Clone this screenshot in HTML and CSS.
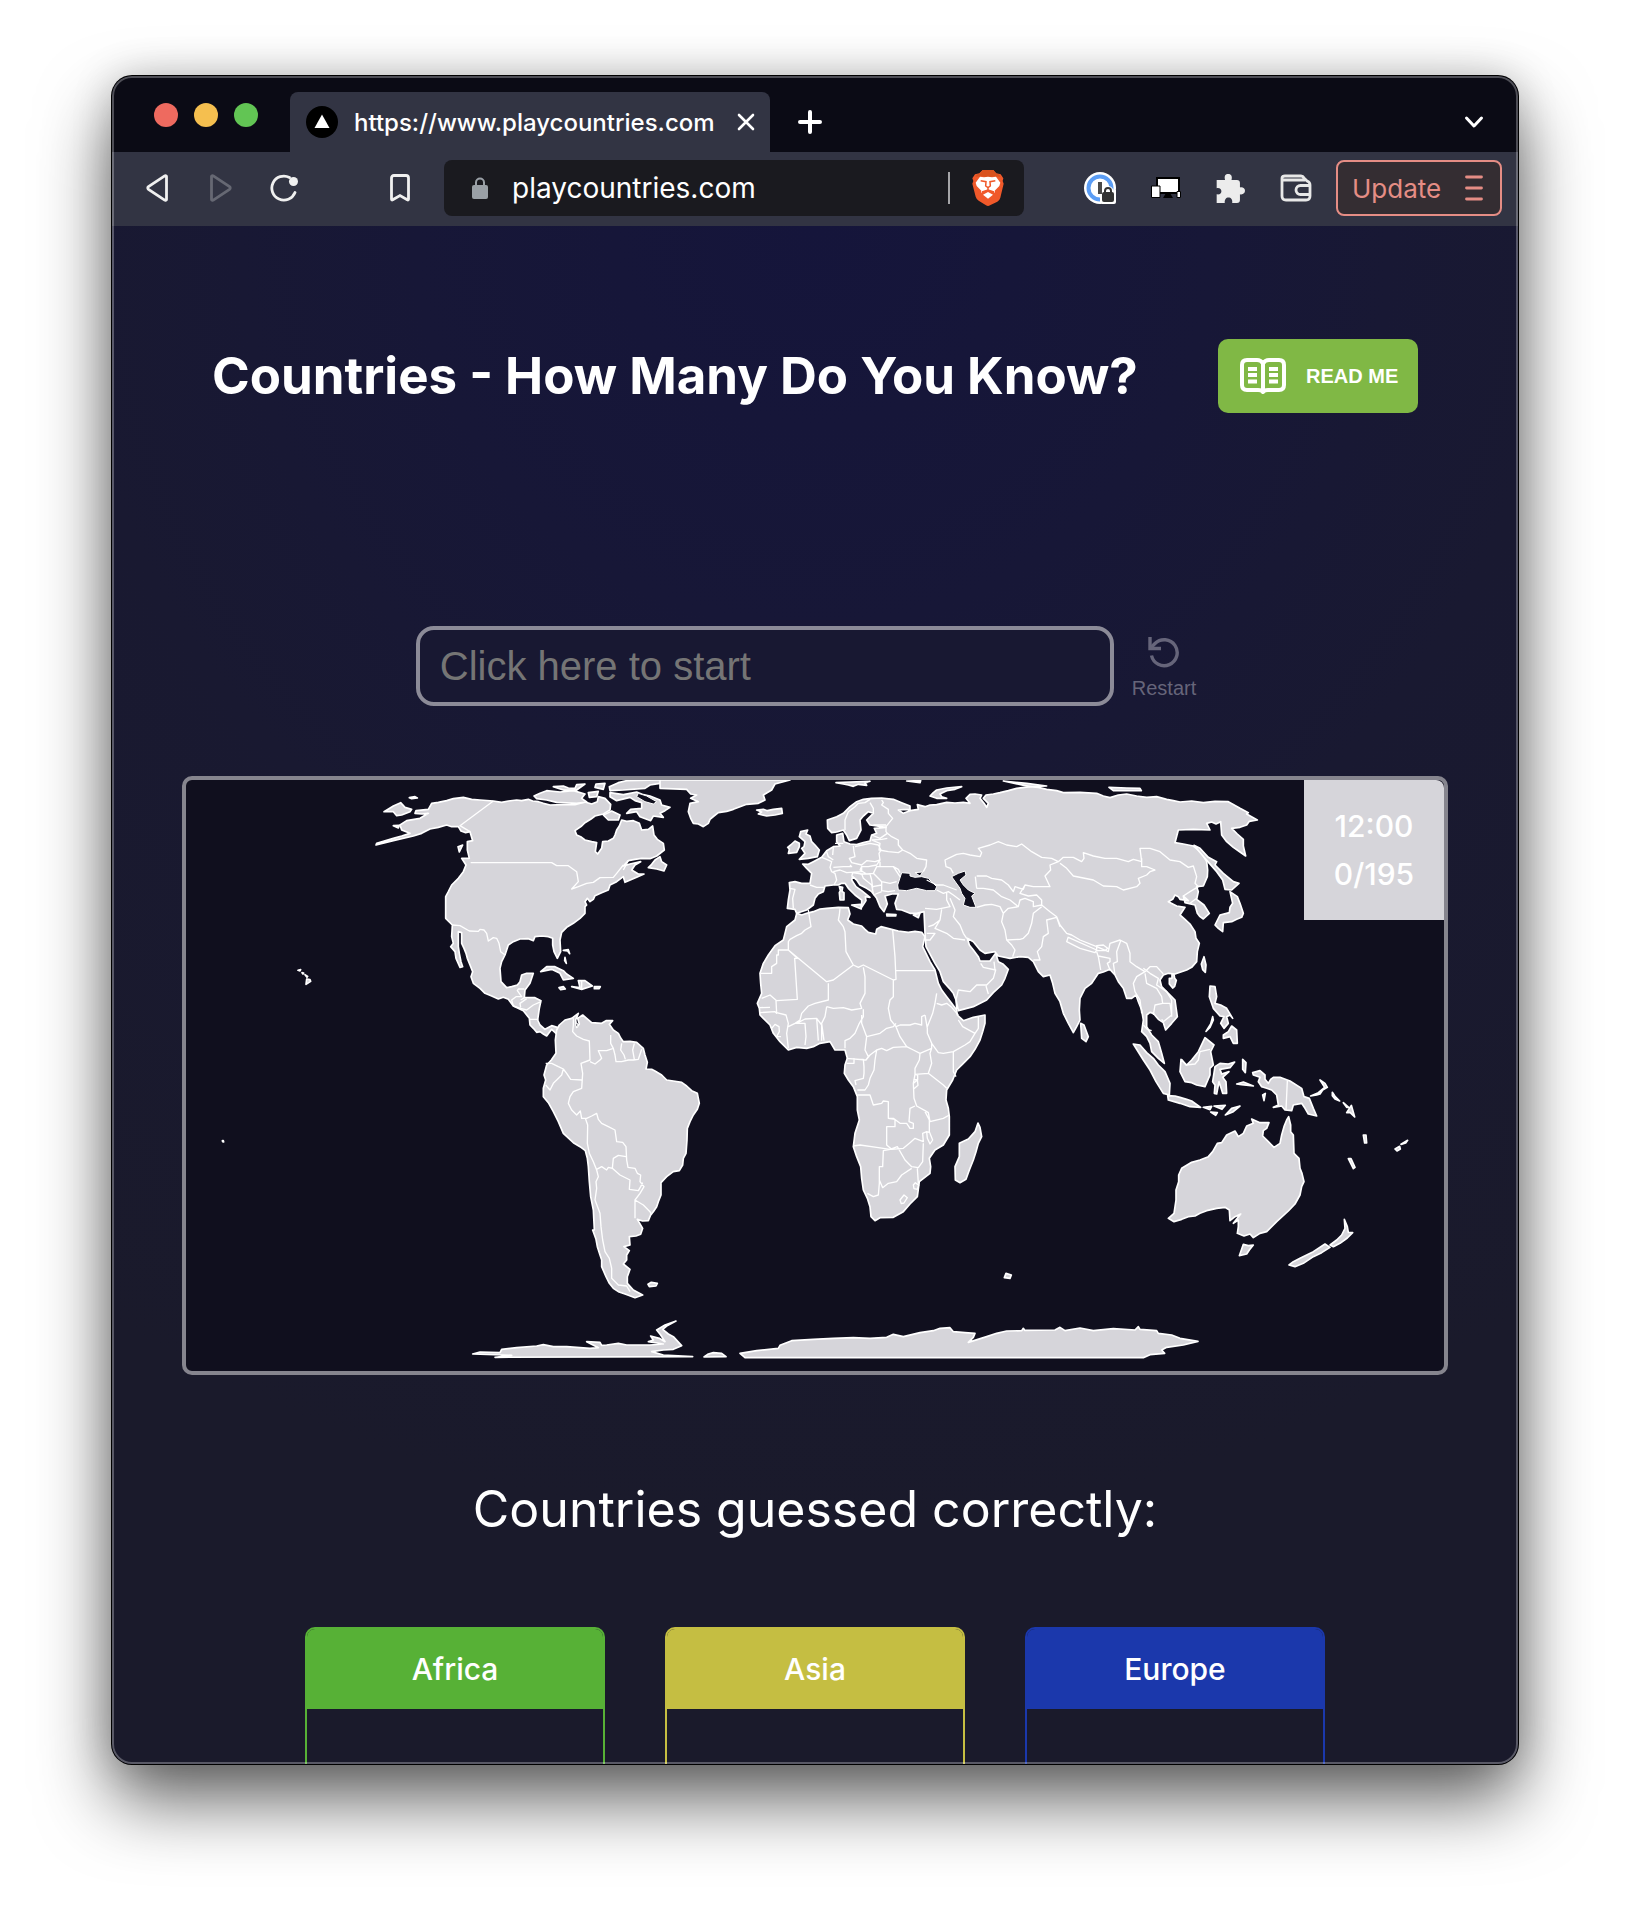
FILE: index.html
```html
<!DOCTYPE html>
<html lang="en">
<head>
<meta charset="utf-8">
<title>Countries - How Many Do You Know?</title>
<link rel="stylesheet" href="styles.css">
</head>
<body>
<div class="window">
  <header class="tabstrip">
    <div class="lights">
      <span class="light light-close"></span>
      <span class="light light-min"></span>
      <span class="light light-max"></span>
    </div>
    <div class="tab">
      <svg class="favicon" viewBox="0 0 32 32" width="32" height="32" aria-hidden="true"><circle cx="16" cy="16" r="16" fill="#000"/><path d="M16 8.500l7.500 13.500h-15z" fill="#fff"/></svg>
      <span class="tab-title">https://www.playcountries.com</span>
      <button class="plain" aria-label="Close tab"><svg viewBox="0 0 18 18" width="18" height="18"><path d="M2 2l14 14M16 2L2 16" stroke="#fff" stroke-width="2.600" stroke-linecap="round"/></svg></button>
    </div>
    <button class="plain new-tab" aria-label="New tab"><svg viewBox="0 0 24 24" width="24" height="24"><path d="M12 2v20M2 12h20" stroke="#fff" stroke-width="4" stroke-linecap="round"/></svg></button>
    <button class="plain tab-list" aria-label="List tabs"><svg viewBox="0 0 20 14" width="20" height="14"><path d="M2.500 3l7.500 8 7.500-8" fill="none" stroke="#fff" stroke-width="3" stroke-linecap="round" stroke-linejoin="round"/></svg></button>
  </header>

  <nav class="toolbar">
    <div class="nav-buttons">
      <button class="plain" aria-label="Back"><svg viewBox="-3 0 28 28" width="28" height="28"><path d="M21.500 2.600v22.800c0 .8-1 1.200-1.800.7L3.500 15.300c-1-.8-1-1.800 0-2.600L19.700 1.900c.8-.5 1.800-.1 1.800.7z" fill="none" stroke="#f0f0f0" stroke-width="2.800"/></svg></button>
      <button class="plain" aria-label="Forward"><svg viewBox="1 0 28 28" width="28" height="28"><path d="M6.500 2.600v22.800c0 .8 1 1.200 1.800.7l16.200-10.800c1-.8 1-1.800 0-2.600L8.300 1.900c-.8-.5-1.800-.1-1.800.7z" fill="none" stroke="#666873" stroke-width="2.800"/></svg></button>
      <button class="plain" aria-label="Reload"><svg viewBox="0 0 28 28" width="28" height="28"><path d="M25 18.500A12 12 0 1 1 19.500 3.500" fill="none" stroke="#f0f0f0" stroke-width="2.800" stroke-linecap="round"/><circle cx="23.500" cy="7.500" r="4.500" fill="#f0f0f0"/></svg></button>
    </div>
    <button class="plain bookmark" aria-label="Bookmark"><svg viewBox="0 0 20 28" width="20" height="28"><path d="M1.500 4q0-2.500 2.500-2.500h12q2.500 0 2.500 2.500v21q0 1.500-1.200.8L10 21.500l-7.300 4.300q-1.200.7-1.200-.8z" fill="none" stroke="#f0f0f0" stroke-width="2.800"/></svg></button>
    <div class="address">
      <svg viewBox="0 0 16 22" width="16" height="22" aria-hidden="true"><rect y="8" width="16" height="14" rx="2" fill="#9aa0a6"/><path d="M4 9V5.500a4 4 0 0 1 8 0V9" fill="none" stroke="#9aa0a6" stroke-width="2"/></svg>
      <input class="url" type="text" value="playcountries.com" aria-label="Address">
      <span class="divider"></span>
      <svg viewBox="0 0 96 108" width="32" height="36" role="img" aria-label="Brave Shields"><path d="M32 0h32l9 10 13 3 8 12-2 8 3 8-10 42q-2 8-9 12L54 106q-6 4-12 0L20 92q-7-5-9-12L1 41l3-8-3-8 8-12 13-3z" fill="#f0592a"/><path d="M32 0h32l9 12 8 1 5 7-20-1-18 3-18-3-20 1 5-7 8-1z" fill="#d9531f"/><path d="M24 20l12 2 12-2 12 2 12-2 13 18-3 10-14 14 1 6-10-5-11-4-11 4-10 5 1-6-14-14-3-10z" fill="#fff"/><path d="M26 32l16 3-1 13 7 5 7-5-1-13 16-3M48 52v12M30 66l18-6 18 6" fill="none" stroke="#f0592a" stroke-width="4.500"/><path d="M33 74l15-8 15 8-15 12z" fill="#fff"/></svg>
    </div>
    <div class="extensions">
      <button class="plain" aria-label="Password manager"><svg viewBox="0 0 32 32" width="32" height="32"><circle cx="16" cy="16" r="16" fill="#fff"/><path d="M16 18h16v12q0 2-2 2H18z" fill="#fff"/><circle cx="16" cy="16" r="11.500" fill="none" stroke="#5b9df5" stroke-width="4"/><path d="M18 18q2-4 6-4t6 5v11H16V20z" fill="#fff"/><path d="M14 10h4v12h-4z" fill="#4a4a4a"/><path d="M18 22q0-2 2-2h8q2 0 2 2v6q0 2-2 2h-8q-2 0-2-2z" fill="#333"/><path d="M21 21v-2a3 3 0 0 1 6 0v2" fill="none" stroke="#333" stroke-width="2"/></svg></button>
      <button class="plain" aria-label="Responsive viewer"><svg viewBox="0 0 30 22" width="30" height="22"><path d="M6 1h22v15H6z" fill="#fff" stroke="#000" stroke-width="2"/><path d="M15 16h4l3 5H12z"/><path d="M.5 9h8.500v11.500H.5zM26 14.500h3.500v6H26z" fill="#fff" stroke="#000"/></svg></button>
      <button class="plain" aria-label="Extensions"><svg viewBox="0 0 86 86" width="29" height="29"><path d="M2 18h25C24 8 26 0 36 0s13 8 10 18h16q9 0 9 9v13c8-2 15 2 15 10s-7 12-15 10v17q0 9-9 9H48c2-10-4-16-11-16s-12 6-11 16H2V60c9 2 14-3 14-9S11 40 2 42z" fill="#ececec"/></svg></button>
      <button class="plain" aria-label="Wallet"><svg viewBox="0 0 32 28" width="32" height="28"><path d="M2 4v18q0 4 4 4h20q4 0 4-4v-11q0-3-3-4l-3-3Q23 2 21 2H5Q2 2 2 4zM3 6h22M30 11.500h-9.500a4.500 4.500 0 0 0 0 9H30" fill="none" stroke="#e8e8e8" stroke-width="2.800"/></svg></button>
    </div>
    <button class="update"><span>Update</span><svg viewBox="0 0 18 26" width="18" height="26" aria-hidden="true"><path d="M1.500 2h15M1.500 13h15M1.500 24h15" stroke="#e58d85" stroke-width="2.800" stroke-linecap="round"/></svg></button>
  </nav>

  <main class="page">
    <div class="page-head">
      <h1>Countries - How Many Do You Know?</h1>
      <button class="readme">
        <svg viewBox="0 0 46 36" width="46" height="36" aria-hidden="true"><path d="M23 5.500Q21 2 17 2H7Q2 2 2 7v20q0 5 5 5h11q4 0 5 2 1-2 5-2h11q5 0 5-5V7q0-5-5-5H29q-4 0-6 3.500zM23 5v29" fill="none" stroke="#fff" stroke-width="4" stroke-linejoin="round"/><path d="M8 11h9M8 17h9M8 23.500h9M29 11h9M29 17h9M29 23.500h9" stroke="#fff" stroke-width="4"/></svg>
        <span>READ ME</span>
      </button>
    </div>

    <form class="guess">
      <input class="guess-input" type="text" placeholder="Click here to start" aria-label="Country name">
      <button class="restart" type="button">
        <svg viewBox="0 0 32 34" width="32" height="34" aria-hidden="true"><path d="M3.500 20.500A13 13 0 1 0 7 8.500L3 12.500" fill="none" stroke="#66657a" stroke-width="3.400"/><path d="M2 2v11.500h11" fill="none" stroke="#66657a" stroke-width="3.400"/></svg>
        <span>Restart</span>
      </button>
    </form>

    <section class="map">
      <svg class="world" viewBox="18 30 3774 1773" role="img" aria-label="World map">
        <g class="land">
          <!-- North and Central America -->
          <path d="M755 100L775 97 800 92 820 86 850 82 875 88 900 90 940 93 965 97 985 93 1010 90 1025 92 1045 88 1058 93 1075 95 1090 100 1110 105 1150 104 1185 104 1215 96 1235 102 1252 95 1255 80 1275 85 1292 103 1290 120 1270 132 1245 138 1232 148 1215 158 1205 168 1185 182 1190 195 1202 200 1215 210 1235 215 1250 218 1246 245 1253 252 1265 235 1268 215 1285 213 1300 205 1305 195 1310 180 1318 168 1325 150 1340 154 1360 152 1378 160 1385 180 1405 178 1418 168 1422 195 1432 208 1450 220 1453 240 1430 258 1410 266 1385 265 1365 268 1345 272 1330 288 1350 282 1382 275 1365 285 1355 300 1375 312 1392 312 1370 322 1335 337 1330 320 1310 335 1290 345 1285 360 1265 368 1245 377 1240 388 1230 395 1222 385 1215 395 1220 405 1215 410 1215 430 1200 445 1180 460 1160 472 1145 487 1140 510 1142 545 1132 565 1122 545 1118 525 1118 505 1105 500 1085 498 1065 500 1060 512 1045 506 1020 507 1000 515 985 525 975 555 965 575 960 595 963 635 980 653 995 650 1012 645 1020 635 1025 615 1040 610 1060 610 1050 640 1035 660 1033 682 1065 683 1083 692 1078 715 1073 750 1080 765 1095 778 1115 767 1132 772 1138 782 1150 770 1140 800 1128 790 1115 778 1100 798 1090 792 1080 785 1070 787 1060 775 1050 765 1048 745 1030 722 1000 708 985 688 970 682 955 687 935 678 915 670 900 655 880 640 873 620 878 605 870 585 862 565 858 550 852 535 845 520 845 488 835 485 835 530 838 550 843 575 848 590 840 592 828 565 825 545 812 530 820 520 815 500 817 465 797 445 797 415 797 380 805 365 815 345 835 325 850 305 858 285 845 265 868 265 862 240 862 215 878 212 870 185 857 188 843 183 835 170 815 170 800 165 775 172 750 177 725 190 700 198 640 212 588 225 590 220 640 205 665 198 690 190 665 180 660 165 680 152 720 145 745 130 725 132 705 130 708 122 745 118z"/>
          <path d="M612 125L640 108 662 98 675 112 695 118 690 125 665 135 650 137 640 125zM688 83L705 80 712 84 695 86zM640 167L658 166 655 174zM834 230L848 225 838 246zM1062 78L1080 70 1100 62 1140 66 1180 62 1215 72 1205 85 1220 96 1190 100 1130 97 1100 90 1070 86zM1120 50L1150 48 1165 54 1185 55 1190 44 1215 42 1190 60 1150 60zM1248 42L1275 40 1270 58 1245 52zM1225 68L1255 64 1250 80 1228 82zM1288 50L1315 38 1340 32 1440 30 1500 30 1500 55 1470 52 1440 40 1410 45 1395 55 1330 60 1290 62zM1290 68L1330 74 1350 70 1370 66 1390 74 1410 78 1440 90 1445 105 1470 112 1455 122 1440 130 1450 142 1420 138 1412 152 1380 140 1370 125 1340 130 1352 118 1385 115 1385 98 1365 92 1350 82 1310 92 1290 80zM1270 135L1295 123 1320 135 1315 150 1285 150zM1405 293L1415 283 1425 270 1440 260 1445 275 1460 285 1452 303 1430 297z"/>
          <path d="M1082 605L1100 590 1125 590 1150 602 1160 612 1180 625 1150 630 1140 610 1115 598zM1175 650L1200 653 1195 632 1215 632 1237 648 1205 658zM1137 653L1150 650 1156 657 1142 659zM1243 650h18l-4 6h-14zM1150 541l15-2 4 12-6-8zM1155 562l4 18-5-8zM354 601l8-2-2 4zM366 608l5 1-2 3zM375 614l8 5-2 3zM380 627l10 2 2 5-14 9zM127 1112l3 0 1 4-3-1z"/>
          <!-- South America -->
          <path transform="translate(660 690)" d="M470 90L478 75 495 60 515 55 535 40 527 60 530 82 538 72 533 55 548 45 560 55 575 68 605 70 618 62 638 62 628 73 640 90 655 100 662 114 670 125 690 124 710 127 730 145 735 165 742 187 738 207 755 208 765 213 785 225 800 240 820 243 845 247 860 258 875 272 892 280 898 310 892 328 880 345 870 365 862 385 861 420 858 460 850 475 848 495 838 512 820 515 800 530 783 548 783 585 775 605 770 620 760 635 752 645 745 662 728 663 712 658 728 685 722 703 708 708 688 710 690 735 672 740 688 752 680 765 680 780 670 792 690 808 682 830 682 850 700 870 728 885 705 893 675 882 655 875 640 865 628 850 618 830 605 800 605 780 600 765 592 740 588 718 578 690 583 690 580 630 572 590 568 545 565 500 562 475 556 452 540 440 520 428 490 400 475 365 460 335 445 308 430 290 430 265 437 240 432 225 440 195 454 180 468 160 466 120zM744 853l10-6 18 3-4 8-20 2z"/>
          <!-- Greenland, Iceland and the Arctic islands -->
          <path transform="translate(1500)" d="M-60 30L330 30 285 42 275 60 250 75 255 90 235 100 200 103 180 110 160 118 140 124 115 128 102 138 90 148 85 160 70 170 55 162 40 160 32 145 25 125 30 100 55 95 32 85 50 75 32 72 20 58-60 55zM230 120L250 118 262 122 280 118 305 115 307 130 285 135 260 138 235 132 245 126zM468 38L510 36 570 34 555 40 560 46 535 43 520 49 505 45 490 42zM680 33L722 32 720 38zM750 78L760 68 770 60 800 54 845 50 825 58 800 62 780 72 785 80 800 85 770 85zM970 33L1040 40 1100 48 1050 50zM1287 52L1340 54 1380 55 1384 62 1300 62z"/>
          <!-- Africa -->
          <path transform="translate(1500)" d="M350 430L365 435 380 430 400 425 420 417 440 415 475 412 505 413 510 432 503 450 520 462 545 468 555 478 565 487 587 492 590 478 603 470 635 478 655 483 685 487 705 484 725 487 735 500 728 530 750 575 765 600 775 640 785 660 800 680 815 700 830 720 832 735 850 752 880 742 915 735 915 760 908 785 900 810 885 838 870 860 850 880 830 900 818 930 800 960 798 990 805 1015 808 1040 808 1095 790 1125 765 1140 748 1165 752 1190 750 1210 718 1235 712 1280 690 1302 670 1325 640 1342 600 1343 585 1352 573 1340 570 1310 562 1285 550 1260 545 1225 542 1190 530 1160 520 1130 525 1090 538 1050 532 1020 532 980 520 950 505 930 493 910 495 885 502 865 495 840 465 840 450 815 420 820 400 830 380 835 350 832 325 840 300 815 280 790 270 765 240 735 238 715 232 700 245 670 242 640 240 610 250 580 265 555 285 527 310 510 315 490 320 470 345 450zM894 1059L900 1072 905 1100 895 1120 888 1145 880 1170 868 1200 858 1228 840 1238 826 1230 825 1190 838 1160 838 1120 865 1107 885 1085zM973 1523l5-13 16 5-4 10z"/>
          <!-- Eurasia -->
          <path transform="translate(1500)" d="M328 338L345 335 365 340 390 340 395 310 380 295 368 282 385 283 400 275 425 262 440 242 460 230 480 228 470 215 470 195 488 190 492 215 510 222 530 224 550 218 570 213 575 195 590 190 583 175 618 172 590 168 570 165 560 150 580 130 565 125 550 138 540 150 543 180 530 205 508 212 500 195 490 180 470 186 455 188 443 175 442 150 470 140 490 130 510 110 530 95 550 88 575 85 605 84 640 88 665 98 690 108 690 118 670 119 655 120 670 130 690 122 715 118 712 104 735 110 750 105 770 104 800 97 825 99 850 97 870 100 858 85 870 73 885 72 905 75 900 85 912 100 920 112 925 100 910 85 918 75 940 72 960 68 985 62 1010 55 1050 50 1075 52 1100 58 1130 62 1150 68 1200 67 1250 70 1270 78 1290 83 1315 75 1340 72 1370 78 1400 82 1430 80 1460 88 1480 92 1500 96 1535 93 1570 98 1605 94 1645 95 1680 115 1705 128 1700 132 1732 150 1708 154 1700 165 1680 172 1655 175 1672 192 1690 208 1690 228 1697 258 1680 246 1660 232 1640 215 1625 195 1622 155 1608 162 1595 156 1580 160 1590 180 1540 178 1495 180 1485 218 1510 222 1540 228 1565 248 1580 275 1583 300 1582 320 1570 348 1550 350 1555 365 1550 388 1572 405 1588 430 1570 447 1560 440 1552 430 1545 405 1515 398 1510 378 1525 392 1500 388 1495 380 1485 375 1478 388 1465 395 1490 408 1515 412 1500 435 1515 448 1530 462 1545 485 1548 505 1558 520 1552 545 1550 575 1535 592 1520 600 1485 612 1465 610 1450 615 1440 630 1445 650 1465 670 1485 690 1492 740 1475 760 1457 780 1450 758 1435 748 1420 730 1410 727 1400 735 1400 770 1415 795 1435 815 1445 850 1453 880 1435 865 1415 845 1410 820 1400 800 1385 785 1390 750 1385 720 1375 695 1368 675 1355 685 1340 685 1330 655 1315 635 1305 615 1290 598 1270 606 1255 610 1235 640 1215 655 1200 685 1198 720 1200 750 1190 770 1180 788 1165 760 1150 730 1140 695 1125 670 1118 640 1110 615 1090 620 1075 605 1060 575 1045 562 1020 560 990 565 955 558 945 545 915 550 900 540 880 515 862 505 868 525 880 540 895 560 900 573 930 573 947 550 955 575 970 583 985 598 975 625 965 645 940 668 920 690 880 710 835 722 828 690 820 670 808 655 790 635 780 605 765 580 738 530 735 490 732 425 710 430 690 430 665 420 650 418 645 400 655 372 636 372 615 378 622 402 612 425 600 410 590 385 575 365 560 355 540 345 530 330 518 320 515 330 528 350 545 362 570 382 556 380 558 392 545 412 545 390 525 375 505 355 495 340 485 340 475 345 460 345 435 348 430 365 415 372 405 385 400 405 380 420 350 430 345 418 322 415 325 390 330 360z"/>
          <path transform="translate(1500)" d="M362 185L383 180 378 192 390 198 395 215 405 225 418 240 412 260 385 265 358 268 375 250 365 235 372 230 375 215 358 200zM325 250L328 238 323 232 332 225 345 213 358 220 358 230 350 247zM478 350l10 2-2 12 6 4 0 22-12 0-2-22 3-6zM515 405l27-2 2 14zM620 432l28 2-1 4h-26zM700 435l20-6-5 14zM1202 760L1212 765 1225 800 1218 815 1205 805z"/>
          <!-- East Asia and Oceania -->
          <path transform="translate(2610)" d="M432 226L450 235 475 262 500 275 495 285 520 310 550 335 567 340 545 360 525 358 518 330 500 305 465 265zM540 365L562 380 570 400 580 430 575 442 560 448 545 455 520 458 518 485 505 475 495 465 510 435 538 428 540 412 548 400zM462 560l6 25-2 22-8-8-4-17zM358 625l8 0 0-12 6 0 2 12 5 6-5 18-6 5-10-12zM480 648L495 650 500 680 495 700 512 705 530 715 548 745 540 735 530 740 535 760 522 775 512 760 522 740 510 738 490 715 478 680zM520 795L535 785 545 768 560 780 562 820 550 820 540 800 520 805zM488 740l2 10-10 22-12 12 14-22zM250 822L270 825 290 848 310 865 325 885 345 905 360 940 358 975 340 970 318 935 300 900 280 870zM393 868L410 885 425 870 445 845 465 803 492 825 482 845 490 885 480 895 480 915 465 950 440 945 425 938 405 935 390 905z"/>
          <path transform="translate(2760 690)" d="M203 287L225 288 240 292 260 298 275 303 302 322 270 320 240 310 205 300zM310 322l25-3-5 10zM342 318l34-2-10 12zM332 336l20 2-5 8zM376 345L395 325 420 318 400 335zM345 200L360 190 385 192 404 186 390 203 360 208 365 222 387 215 368 232 378 245 380 280 368 280 362 260 357 245 350 282 343 280 345 255 338 245zM428 178l10 10-2 30-8-10zM410 252l20-6 30 12-35-4zM458 218L480 212 495 225 495 238 505 250 512 238 520 232 540 232 570 243 605 265 612 290 628 295 640 325 650 348 625 342 615 325 605 310 580 315 575 332 555 330 545 318 520 322 535 315 530 285 515 270 500 265 485 260 475 245 480 232 460 225zM488 285l8-5-4 22zM632 288L650 285 660 282 668 270 682 262 675 250 660 240 674 262 655 278zM697 277l8 12 14 14-14-6-8-10zM730 308l16 14-6 0zM740 338l14-22 10 35-14-14zM790 405l8 0 2 24-6 0zM745 476l8 0 12 26-5 4zM885 447l14-8 2 8-10 6zM903 433l20-12-6 8z"/>
          <path transform="translate(2760 690)" d="M205 655L222 640 228 600 228 570 236 545 236 525 245 505 275 487 300 480 325 470 338 455 352 430 365 428 380 405 405 393 415 410 430 400 440 378 460 370 455 357 480 368 507 368 500 385 490 392 488 408 505 425 522 442 540 430 545 405 552 380 560 360 566 350 572 375 572 395 580 405 582 460 597 475 600 505 606 520 612 545 605 560 600 585 585 612 565 633 530 665 500 695 480 700 460 713 450 702 432 708 412 700 415 680 415 660 400 670 422 642 405 650 390 662 388 630 375 622 350 625 320 632 300 640 285 648 265 650 245 658 222 665zM430 733L445 737 460 735 448 750 440 762 418 767zM567 795L580 785 600 775 640 755 675 732 690 742 665 758 640 770 610 790 585 800zM690 735L710 720 725 705 735 685 733 658 742 680 745 697 758 698 742 714 720 730 700 740z"/>
          <!-- Antarctica -->
          <path transform="translate(660 690)" d="M218 1062L240 1056 300 1058 305 1048 350 1043 410 1038 430 1034 460 1040 500 1040 570 1045 595 1043 560 1025 600 1027 605 1036 620 1035 655 1030 680 1035 750 1035 790 1032 745 1025 760 1020 752 1008 778 1015 795 1025 782 1005 770 990 795 975 828 963 800 978 788 988 805 1002 820 1010 845 1037 820 1048 790 1050 755 1055 790 1065 878 1070 285 1072 335 1066zM912 1071L925 1062 940 1058 965 1060 978 1070z"/>
          <path transform="translate(1620 690)" d="M60 1060L110 1052 175 1045 180 1036 215 1022 280 1018 340 1015 400 1013 450 1015 500 1012 520 1003 550 1010 600 998 640 992 660 985 690 983 700 995 735 998 765 1000 760 1012 745 1027 800 1010 830 1000 860 993 905 992 910 985 914 991 1005 990 1020 982 1035 992 1080 984 1120 992 1180 986 1245 990 1255 980 1260 988 1310 992 1315 1000 1355 1005 1380 1015 1434 1024 1390 1035 1340 1042 1325 1050 1334 1060 1290 1064 1270 1073H75z"/>
        </g>
        <g class="seas">
          <path d="M2165 308L2190 310 2190 318 2205 322 2225 320 2245 325 2255 335 2270 350 2265 362 2240 362 2210 355 2180 362 2155 360 2153 345zM2205 308l23-2-8 12zM2315 320L2335 310 2355 303 2358 315 2340 330 2350 345 2365 360 2385 370 2375 378 2388 412 2370 412 2350 405 2355 385 2345 370 2340 355z"/>
          <path d="M1375 70L1400 78 1430 95 1420 102 1395 95 1370 80zM1188 760l5 0 0 12-5-4z"/>
        </g>
        <g class="borders">
          <!-- Americas -->
          <path d="M940 93L840 167 870 185M872 278H1115L1130 287 1165 287 1190 305 1195 335 1175 357 1195 350 1220 340 1240 337 1260 323 1300 322 1310 310 1330 285M817 465L840 467 868 483 895 484 900 478 912 480 920 490 925 513 940 503 950 505 957 520 962 545 975 555M1000 708L995 690 1008 680 1025 680 1012 662 1015 657H1033M1000 708L1022 715 1040 720 1060 705 1083 695M1022 690L1035 682M1022 712L1020 700 1040 686M1050 748H1075M1205 632V657M1345 272L1330 300"/>
          <path transform="translate(660 690)" d="M520 55L520 75 518 95 530 108 550 118 568 123 570 180 543 190 548 220 545 265 520 275 510 290 505 310 515 330 530 345 541 333 545 355 560 355 575 348 590 340 595 358 605 370 625 380 645 390 650 425 668 427 678 440 680 480 684 502 705 505 712 520 722 525 720 545 732 560 720 580 705 600 730 615 750 635 755 645M437 190L455 190 475 200 490 207 485 225 470 240 460 250 450 270 437 255M490 207L500 220 512 238 545 240M570 185L585 192 600 180 605 175 595 152 620 152 640 145 632 130 632 105M640 145L645 165 648 185 665 185 685 180 700 180 715 178 725 148M665 130L662 150 672 165 676 178M703 130L698 150 703 178M556 355L563 375 562 430 568 460 580 485 590 510 595 530 588 545 590 565 585 600 600 640 603 680 608 720 615 755 628 775 635 805 635 835 655 855 680 858 690 875M590 508L605 500 620 510 625 502 637 505 660 525 690 540 688 568 715 572 722 560 728 548M637 505L640 475 655 466 678 470M705 600V655"/>
          <!-- Africa -->
          <path transform="translate(1500)" d="M385 420L393 470 375 480 365 490 350 497 330 508 325 515V540L440 635 460 630 520 585 535 592 550 585 640 630 648 628 645 560 638 480M480 415L478 435 475 450 490 470 495 485 498 545 520 585M648 602H765M640 630L640 680 630 690 625 715 632 750 648 770 660 765 690 765 705 760 725 765 725 740 735 735M325 540H295V555H290V580L275 590V610H243M325 540L352 565 344 565 352 688 290 692 270 675 245 685M445 640V690L405 700 385 708 365 730 360 750 345 760M440 710L460 715 490 713 515 720 545 715 540 700 555 670 555 620 550 592M440 710L435 740 425 760 432 812M240 713L270 712M240 728L285 725 290 730 288 692M290 728L318 735 325 760 320 790 325 835M275 775L285 763 297 770 298 785 290 800 303 800M325 770L345 760H375L378 800 375 825M350 760L375 747 410 745 415 812M410 745L425 765 425 812M550 718L550 740 538 760 525 790 510 805 495 812 495 835M545 735V760L560 800 600 790 620 775 640 770 648 760M560 800L555 840 565 860 558 870 500 865M648 770L660 800 680 830 640 832 620 842 605 835 590 840 570 855 558 870M735 735L742 775 742 790 755 820 755 835 720 850 700 840 680 830M770 670L765 700 758 730 742 770M770 700L785 705 800 700 815 712 835 735M835 750L848 770 885 790 870 815 855 825 820 845 790 850 775 848 755 820M895 740V775L885 790M755 835L750 850 755 880 745 910 705 913M745 910L790 945 800 955M820 845V905L828 920M720 850L718 870 705 895 705 913 700 940M590 840L585 870 582 900 570 925 565 945 555 960 532 960M522 865V880H500M535 868H550L552 890 552 910 550 925 525 932 528 945M700 940L702 985 710 1008 735 1022 745 1028 750 1055 790 1045 808 1035M532 975H570L580 1005 605 1000 610 993 625 995V1045H640L660 1060 680 1060 690 1075H700L700 1060 687 1055 690 1015 705 1008M625 1045L645 1048V1070H620V1125L635 1138 670 1135 690 1118 705 1105 730 1115 728 1090 740 1085 750 1088M520 1128L540 1125 590 1132 630 1138 652 1130 655 1135 675 1170 695 1190 715 1193 728 1175 730 1120M635 1137L610 1142 608 1190H598L598 1240 595 1275 580 1280 562 1270M598 1230L608 1253 625 1240 650 1235 665 1215 695 1195M712 1195L715 1240M735 1025L748 1050 748 1085 758 1110 750 1122 742 1105 740 1085M660 1290l12-15 10 8-10 16-8 2zM700 1245l6-7 10 8-4 12-10-2zM705 913l8 2v14l-14 12M700 930l12-2 2 18-12 10"/>
          <!-- Europe -->
          <path transform="translate(1500)" d="M328 355L345 358 338 385 340 415M390 345L410 352 435 352M425 262L440 268 455 275 450 292 455 305 465 310 470 330 462 345M440 245L445 260 460 270M460 232L458 255M465 220H490M495 180L495 150 505 125 525 110 535 100 555 98 570 88M580 130L580 115 570 98M605 90L610 98 605 105 625 118 625 130 638 145 618 170 618 185 622 190 635 200 655 210 655 225 668 240 690 250 710 265 740 270 738 290 730 305M520 228L522 245 525 260 508 265 515 278 545 285 560 272 585 275 600 270 597 250 603 240 595 225 570 220 525 230M575 210L600 220 597 240 625 245 655 248 668 240M575 195L600 205 622 190M575 210L605 208 622 205M510 285L515 290 490 290 460 292M460 305L480 300 500 308 545 305 545 290 565 290 590 285 600 270M545 290L540 300 560 312 580 310 590 290 620 290 640 290 650 305 660 320M580 310L600 330 605 335 630 340 650 335M545 312L550 325 575 345 580 370M540 312L570 312 575 330 578 355M578 350L605 345M605 335L605 362 625 365 645 362M605 365L580 375M640 290L655 298 660 308M580 165H618M515 320L518 308 545 312M600 275L600 290"/>
          <!-- Asia -->
          <path transform="translate(1500)" d="M820 310L812 295 798 290 795 270 805 265 830 253 850 250 870 255 900 260 905 248 895 235 930 225 955 215 980 225 1010 230 1025 222 1055 245 1085 262 1115 265 1135 275 1150 262 1180 262 1205 275 1212 265 1210 248 1240 258 1275 265 1310 265 1345 275 1360 268 1385 275 1380 235 1410 235 1440 245 1470 270 1500 275 1525 292 1540 288 1550 320 1545 340 1555 350 1530 365 1510 378M1140 280L1160 295 1180 318 1240 330 1270 348 1310 350 1330 360 1370 350 1380 340 1375 325 1400 315 1410 305 1425 300 1400 290 1385 290 1385 265M1135 275L1110 285 1112 300 1095 318 1110 350 1060 350 1035 345 1030 358 1005 350 1000 365 985 345 965 330 935 325 920 318 890 318M890 355L910 355 940 360 965 380 990 390 1015 410 985 415 970 430 960 410 935 403 915 405 890 412M1035 345L1020 370 1045 378 1070 375 1085 390 1085 405 1110 425 1130 440 1140 465 1160 490 1175 495 1200 510 1250 530 1285 545 1290 520 1320 510 1340 520 1350 550 1350 575 1370 590 1395 605 1410 590 1430 590 1450 612M886 320L890 355M1015 410L1020 390 1035 385 1060 395 1060 410 1085 405M970 430L965 455 975 480 980 510 1020 508 1030 505 1045 490 1055 460 1060 430 1085 410M980 510L995 525 1005 540 998 560M1060 570L1080 570 1072 545 1085 530 1090 500 1105 490 1100 450 1130 442 1140 470M1165 500L1160 515 1200 535 1245 548 1250 540 1165 502M1250 527L1270 525 1283 535 1275 542H1250zM1250 545L1255 560 1262 600M1255 558L1290 565 1290 575 1282 580 1290 600M1322 512L1310 545 1312 575 1300 580 1305 615M1395 605L1370 620 1360 640 1365 665 1380 690 1385 730M1395 610L1400 640 1430 655 1445 680 1448 700 1425 705 1420 735M1448 700L1470 700 1475 735 1450 755 1445 748M1390 595L1410 610 1435 625 1430 645 1460 665 1475 690 1475 740M1390 765L1402 778 1415 782M740 330L770 345 790 345 830 360M770 360L790 370 805 365 820 375 840 390M800 365L800 390 810 410 770 418 735 415M810 385L825 420 820 440 840 465 850 490 860 505M785 418L780 450 760 465 745 470M780 450L765 475 800 490 820 505 855 510M740 490L765 490 750 510 738 510M830 722L828 690 835 660 870 665 890 645 920 645 940 625 947 600 910 592 902 580M945 600L942 575M918 648L925 672M1530 400L1550 385"/>
          <path transform="translate(2610)" d="M395 868L408 885 435 882 445 870 450 845 480 838M712 933L708 1020"/>
        </g>
      </svg>
      <div class="score">
        <span>12:00</span>
        <span>0/195</span>
      </div>
    </section>

    <h2>Countries guessed correctly:</h2>
    <div class="continents">
      <section class="continent africa"><h3>Africa</h3></section>
      <section class="continent asia"><h3>Asia</h3></section>
      <section class="continent europe"><h3>Europe</h3></section>
    </div>
  </main>
</div>
</body>
</html>
```
FILE: styles.css
```css
* {
  box-sizing: border-box;
}

body {
  margin: 0;
  height: 100vh;
  padding: 76px 112px 148px;
  background: #fff;
  font-family: Inter, "Liberation Sans", sans-serif;
  color: #fff;
  overflow: hidden;
}

button {
  font-family: inherit;
  cursor: pointer;
}

svg {
  display: block;
  flex: none;
}

.window {
  position: relative;
  display: flex;
  flex-direction: column;
  height: 100%;
  overflow: hidden;
  border-radius: 20px;
  background: #1a1a2b;
  box-shadow: 0 0 0 1px #000, 0 36px 72px rgba(0, 0, 0, 0.62), 0 0 40px rgba(0, 0, 0, 0.18);
}

/* light rim drawn over the window's edge */
.window::after {
  content: "";
  position: absolute;
  inset: 0;
  border: 2px solid rgba(255, 255, 255, 0.28);
  border-radius: 20px;
  pointer-events: none;
}

.plain {
  display: flex;
  flex: none;
  padding: 0;
  border: 0;
  background: none;
}

/* tab strip */
.tabstrip {
  display: flex;
  flex: none;
  align-items: center;
  height: 76px;
  padding: 16px 34px 0 42px;
  background: #0b0b15;
}

.lights {
  display: flex;
  gap: 16px;
  width: 136px;
  padding-bottom: 14px;
}

.light {
  width: 24px;
  height: 24px;
  border-radius: 50%;
}

.light-close {
  background: #ee6a5f;
}

.light-min {
  background: #f5bf4f;
}

.light-max {
  background: #62c554;
}

.tab {
  display: flex;
  align-items: center;
  width: 480px;
  height: 60px;
  padding: 0 15px 0 16px;
  border-radius: 8px 8px 0 0;
  background: #323443;
}

.tab-title {
  flex: 1;
  margin-left: 16px;
  font-size: 24px;
  font-weight: 500;
  white-space: nowrap;
}

.new-tab {
  margin-left: 28px;
}

.tab-list {
  margin-left: auto;
}

/* toolbar */
.toolbar {
  display: flex;
  flex: none;
  align-items: center;
  height: 74px;
  padding: 0 16px 2px 30px;
  background: #323443;
}

.nav-buttons {
  display: flex;
  gap: 36px;
}

.bookmark {
  margin-left: 92px;
}

.address {
  display: flex;
  align-items: center;
  flex: 1;
  height: 56px;
  margin-left: 34px;
  padding: 0 20px 0 28px;
  border-radius: 8px;
  background: #1a1a1f;
}

.url {
  flex: 1;
  min-width: 0;
  margin-left: 24px;
  padding: 0;
  border: 0;
  background: none;
  color: #fff;
  font: 400 28px Inter, "Liberation Sans", sans-serif;
}

.divider {
  width: 2px;
  height: 32px;
  margin-right: 22px;
  background: #a5a5a8;
}

.extensions {
  display: flex;
  align-items: center;
  gap: 35px;
  margin: 0 24px 0 60px;
}

.update {
  display: flex;
  align-items: center;
  justify-content: space-between;
  width: 166px;
  height: 56px;
  padding: 0 17px 0 14px;
  border: 2px solid #e58d85;
  border-radius: 8px;
  background: #342d32;
  color: #e58d85;
  font-size: 26px;
}

/* page */
.page {
  flex: 1;
  min-height: 0;
  overflow: hidden;
  padding: 113px 70px 0;
  background: radial-gradient(circle at 50% 0, #15153b 0, #171737 400px, #191931 750px, #1a1a2b 1300px);
}

.page-head {
  display: flex;
  align-items: center;
  justify-content: space-between;
  padding: 0 30px;
}

h1,
h2,
h3 {
  margin: 0;
}

h1 {
  font-size: 51px;
  font-weight: 700;
  line-height: 74px;
  white-space: nowrap;
}

.readme {
  display: flex;
  align-items: center;
  gap: 20px;
  width: 200px;
  height: 74px;
  padding: 0 0 0 22px;
  border: 0;
  border-radius: 10px;
  background: #80b845;
  color: #fff;
  font: bold 20px "Liberation Sans", Arial, sans-serif;
}

.guess {
  display: flex;
  align-items: center;
  justify-content: center;
  gap: 18px;
  margin-top: 213px;
  padding-right: 18px;
}

.guess-input {
  width: 698px;
  height: 80px;
  padding: 0 20px;
  border: 4px solid #8c8b98;
  border-radius: 18px;
  background: #181832;
  color: #fff;
  font: 40px "Liberation Sans", Arial, sans-serif;
}

.guess-input::placeholder {
  color: #757575;
}

.restart {
  display: flex;
  flex-direction: column;
  align-items: center;
  gap: 8px;
  padding: 2px 0 0;
  border: 0;
  background: none;
  color: #66657a;
  font: 20px "Liberation Sans", Arial, sans-serif;
}

.map {
  position: relative;
  margin-top: 70px;
  overflow: hidden;
  border: 4px solid #86858e;
  border-radius: 10px;
  background: #100f1e;
}

.world {
  width: 100%;
  height: auto;
}

.land {
  fill: #d6d5da;
  stroke: #fff;
  stroke-width: 5;
  stroke-linejoin: round;
}

.seas {
  fill: #100f1e;
  stroke: #fff;
  stroke-width: 3;
}

.borders {
  fill: none;
  stroke: #fff;
  stroke-width: 4;
  stroke-linejoin: round;
}

/* timer and tally over the map's corner */
.score {
  position: absolute;
  top: 0;
  right: 0;
  display: flex;
  flex-direction: column;
  align-items: center;
  justify-content: center;
  width: 140px;
  height: 140px;
  border-top-right-radius: 8px;
  background: #d6d5da;
  font-size: 30px;
  font-weight: 500;
  line-height: 48px;
}

h2 {
  margin-top: 98px;
  font-size: 50px;
  font-weight: 400;
  line-height: 72px;
  text-align: center;
}

.continents {
  display: flex;
  justify-content: center;
  gap: 60px;
  margin-top: 82px;
}

.continent {
  width: 300px;
  height: 400px;
  border: 2px solid;
  border-radius: 10px;
  overflow: hidden;
}

.continent h3 {
  color: #fff;
  font-size: 30px;
  font-weight: 500;
  line-height: 80px;
  text-align: center;
}

.africa {
  border-color: #57b136;
}

.africa h3 {
  background: #57b136;
}

.asia {
  border-color: #c5be42;
}

.asia h3 {
  background: #c5be42;
}

.europe {
  border-color: #1b38ac;
}

.europe h3 {
  background: #1b38ac;
}
```
